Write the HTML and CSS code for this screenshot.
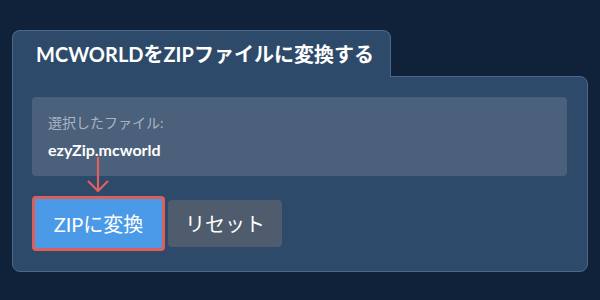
FILE: index.html
```html
<!DOCTYPE html>
<html lang="ja">
<head>
    <meta charset="UTF-8">
    <meta name="viewport" content="width=device-width, initial-scale=1.0">
    <title>MCWORLDをZIPファイルに変換する</title>
    <link rel="stylesheet" href="styles.css">
</head>
<body>
    <div class="converter">
        <div class="tab">MCWORLDをZIPファイルに変換する</div>
        <div class="panel">
            <div class="file-box">
                <div class="file-label">選択したファイル:</div>
                <div class="file-name">ezyZip.mcworld</div>
            </div>
            <div class="actions">
                <div class="convert-wrap">
                    <svg class="arrow" width="24" height="36" viewBox="0 0 24 36">
                        <path d="M12 0 V34 M2 24 L12 34 L22 24" fill="none" stroke="#e0605a" stroke-width="2.2"/>
                    </svg>
                    <button class="btn convert">ZIPに変換</button>
                </div>
                <button class="btn reset">リセット</button>
            </div>
        </div>
    </div>
</body>
</html>
```

FILE: styles.css
```css
body {
    margin: 0;
    background: #10223a;
    font-family: Lato, "Noto Sans CJK JP", sans-serif;
    color: #fff;
}

.converter {
    padding: 30px 12px 0 12px;
}

.tab {
    position: relative;
    z-index: 1;
    width: 379px;
    height: 47px;
    margin-bottom: -1px;
    padding-left: 23px;
    box-sizing: border-box;
    background: #2d4a6a;
    border: 1px solid #4c6787;
    border-bottom: none;
    border-radius: 8px 8px 0 0;
    font-size: 20px;
    font-weight: 700;
    line-height: 46px;
}

.panel {
    background: #2d4a6a;
    border: 1px solid #4c6787;
    border-radius: 0 8px 8px 8px;
    padding: 20px 20px 20px 19px;
    height: 196px;
    box-sizing: border-box;
}

.file-box {
    background: #4b607a;
    border-radius: 4px;
    height: 79px;
    padding: 17px 16px 0 16px;
    box-sizing: border-box;
}

.file-label {
    color: #a9b4c3;
    font-size: 14px;
    line-height: 17px;
}

.file-name {
    margin-top: 9px;
    font-size: 16px;
    font-weight: 700;
    line-height: 20px;
}

.actions {
    display: flex;
    align-items: center;
    gap: 3px;
    margin-top: 20px;
}

.convert-wrap {
    position: relative;
}

.arrow {
    position: absolute;
    left: 54px;
    top: -39px;
}

.btn {
    font-family: Lato, "Noto Sans CJK JP", sans-serif;
    font-size: 20px;
    color: #fff;
    border: none;
    border-radius: 4px;
    cursor: pointer;
    display: block;
}

.convert {
    width: 133px;
    height: 55px;
    background: #4a9ae8;
    border: 3px solid #dc5f5a;
}

.reset {
    width: 114px;
    height: 47px;
    background: #4e5c6d;
}
```
